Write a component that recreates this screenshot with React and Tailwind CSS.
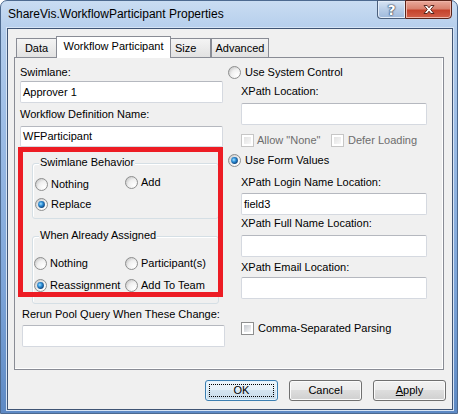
import React, { useId } from "react";

function Radio({ checked }) {
  const raw = useId();
  const id = "r" + raw.replace(/[^a-zA-Z0-9]/g, "");
  return (
    <svg width="13" height="13" viewBox="0 0 13 13" className="shrink-0 block">
      <defs>
        <radialGradient id={id + "a"} cx="0.72" cy="0.72" r="0.85">
          <stop offset="0" stopColor="#ffffff" />
          <stop offset="0.55" stopColor="#f0f0f0" />
          <stop offset="1" stopColor="#c4c4c4" />
        </radialGradient>
        <radialGradient id={id + "b"} cx="0.4" cy="0.4" r="0.65">
          <stop offset="0" stopColor="#a8e4ff" />
          <stop offset="0.45" stopColor="#2e8fd8" />
          <stop offset="1" stopColor="#0b3d73" />
        </radialGradient>
      </defs>
      <circle cx="6.5" cy="6.5" r="6" fill={`url(#${id}a)`} stroke="#8e8f8f" strokeWidth="1" />
      {checked && <circle cx="6.5" cy="6.5" r="3.4" fill={`url(#${id}b)`} />}
    </svg>
  );
}

function Check({ disabled }) {
  return (
    <span
      className={
        disabled
          ? "block w-[13px] h-[13px] shrink-0 border border-[#c6c6c6] bg-white p-[2px]"
          : "block w-[13px] h-[13px] shrink-0 border border-[#8e8f8f] bg-white p-[2px]"
      }
    >
      <span
        className={
          disabled
            ? "block w-full h-full bg-gradient-to-br from-[#e2e2e2] to-[#f8f8f8]"
            : "block w-full h-full bg-gradient-to-br from-[#c5c9cf] to-[#f7f7f7]"
        }
      />
    </span>
  );
}

function Field({ value, className }) {
  return (
    <div
      className={
        "flex items-center bg-white border border-[#d5d9e0] border-t-[#b5b8bf] rounded-[2px] pl-[2px] " +
        className
      }
    >
      {value}
    </div>
  );
}

function Btn({ children, def }) {
  return (
    <div
      className={
        def
          ? "w-[73px] h-[21px] rounded-[3px] border border-[#3c7fb1] bg-[linear-gradient(to_bottom,#eef6fb_0%,#e4eff7_50%,#d3e4f0_50%,#c9dcea_100%)] shadow-[inset_0_0_0_1px_#e3f3fd] flex items-center justify-center p-[3px]"
          : "w-[73px] h-[21px] rounded-[3px] border border-[#707070] bg-[linear-gradient(to_bottom,#f2f2f2_0%,#ebebeb_50%,#dddddd_50%,#cfcfcf_100%)] shadow-[inset_0_0_0_1px_#fbfbfb] flex items-center justify-center"
      }
    >
      {def ? (
        <span className="w-full h-full border border-dotted border-black flex items-center justify-center">
          {children}
        </span>
      ) : (
        children
      )}
    </div>
  );
}

function RadioItem({ checked, label, className }) {
  return (
    <div className={"flex items-center gap-[3px] h-[13px] " + (className || "")}>
      <Radio checked={checked} />
      <span>{label}</span>
    </div>
  );
}

function Group({ title, className, children }) {
  return (
    <div
      className={
        "relative border border-[#d5dfe5] rounded-[3px] shadow-[inset_1px_1px_0_#ffffff] " + className
      }
    >
      <span className="absolute left-[6px] -top-[8px] px-[1px] bg-[#f0f0f0] leading-[13px]">{title}</span>
      {children}
    </div>
  );
}

export default function App() {
  return (
    <div className="w-[458px] h-[414px] overflow-hidden bg-white font-['Liberation_Sans',Arial,sans-serif] text-[11px] leading-[13px] text-black">
      <div className="w-full h-full rounded-t-[7px] border border-[#4d6a90] bg-[linear-gradient(to_bottom,#c9dcf2_0%,#b2cceb_8%,#9dbde6_30%,#7ca4d8_70%,#5d89c4_100%)] flex flex-col">
        {/* Title bar */}
        <div className="h-[27px] flex justify-between">
          <div className="pl-[7px] self-center text-[12px] leading-[15px] text-black">
            ShareVis.WorkflowParticipant Properties
          </div>
          <div className="flex mr-[5px] self-start -mt-px">
            <div className="w-[28px] h-[19px] rounded-bl-[4px] border border-[#4b5f7c] border-r-0 bg-gradient-to-b from-[#d7e4f4] via-[#b8cde7] to-[#9fb9dc] shadow-[inset_0_0_0_1px_#e3ecf8] flex items-center justify-center">
              <span className="text-white font-bold text-[14px] leading-[14px] font-['DejaVu_Sans',sans-serif] [text-shadow:0_0_1px_#2d3e57,0_0_1px_#2d3e57,0_0_2px_#2d3e57]">
                ?
              </span>
            </div>
            <div className="w-[47px] h-[19px] rounded-br-[4px] border border-[#5a2319] bg-[linear-gradient(to_bottom,#e9a99b_0%,#d9826f_45%,#c5432c_55%,#d2604a_100%)] shadow-[inset_0_0_0_1px_#f0b5a8] flex items-center justify-center">
              <svg width="14" height="11" viewBox="0 0 14 11">
                <path
                  d="M2 1.5 L5.2 1.5 L7 3.8 L8.8 1.5 L12 1.5 L8.7 5.5 L12 9.5 L8.8 9.5 L7 7.2 L5.2 9.5 L2 9.5 L5.3 5.5 Z"
                  fill="#ffffff"
                  stroke="#4a1a12"
                  strokeWidth="0.9"
                  strokeLinejoin="round"
                />
              </svg>
            </div>
          </div>
        </div>

        {/* Client */}
        <div className="ml-[6px] w-[446px] h-[382px] border border-[#3f5474] shadow-[0_0_0_1px_#d6e4f5] bg-[#f0f0f0] flex flex-col">
          {/* Tabs */}
          <div className="ml-[8px] mt-[7px] h-[21px] flex items-end">
            <div className="w-[40px] h-[19px] border border-r-0 border-b-0 border-[#898c95] bg-gradient-to-b from-[#f4f4f4] to-[#e2e2e2] flex items-center justify-center">
              Data
            </div>
            <div className="relative z-10 -mb-px w-[115px] h-[22px] border border-b-0 border-[#898c95] bg-white flex items-center justify-center pb-[2px]">
              Workflow Participant
            </div>
            <div className="w-[40px] h-[19px] border border-l-0 border-b-0 border-[#898c95] bg-gradient-to-b from-[#f4f4f4] to-[#e2e2e2] flex items-center pl-[4px]">
              Size
            </div>
            <div className="w-[58px] h-[19px] border border-b-0 border-[#898c95] bg-gradient-to-b from-[#f4f4f4] to-[#e2e2e2] flex items-center justify-center">
              Advanced
            </div>
          </div>

          {/* Page */}
          <div className="ml-[6px] w-[430px] h-[313px] border border-[#898c95] shadow-[inset_-1px_-1px_0_#ffffff] bg-[#f0f0f0] flex">
            {/* Left column */}
            <div className="relative ml-[5px] w-[205px] pt-[8px] flex flex-col">
              <div>Swimlane:</div>
              <Field value="Approver 1" className="mt-[2px] h-[22px] w-[203px]" />
              <div className="mt-[5px]">Workflow Definition Name:</div>
              <Field value="WFParticipant" className="mt-[5px] h-[21px] w-[203px]" />

              <Group title="Swimlane Behavior" className="mt-[16px] ml-[12px] w-[187px] h-[56px]">
                <div className="pt-[12px] flex items-start">
                  <RadioItem label="Nothing" className="ml-[2px] mt-[2px] w-[90px]" />
                  <RadioItem label="Add" />
                </div>
                <RadioItem label="Replace" checked className="ml-[2px] mt-[7px]" />
              </Group>

              <Group title="When Already Assigned" className="mt-[17px] ml-[12px] w-[187px] h-[68px]">
                <div className="pt-[20px] flex items-start">
                  <RadioItem label="Nothing" className="ml-[1px] w-[91px]" />
                  <RadioItem label="Participant(s)" />
                </div>
                <div className="mt-[9px] flex items-start">
                  <RadioItem label="Reassignment" checked className="ml-[1px] w-[91px]" />
                  <RadioItem label="Add To Team" />
                </div>
              </Group>

              <div className="mt-[4px] ml-[2px]">Rerun Pool Query When These Change:</div>
              <Field value="" className="mt-[4px] ml-[2px] h-[22px] w-[203px]" />

              {/* red highlight annotation */}
              <div className="absolute left-[-2px] top-[89px] w-[205px] h-[150px] border-[5px] border-[#ed1c24]" />
            </div>

            {/* Right column */}
            <div className="ml-[3px] w-[200px] pt-[8px] flex flex-col">
              <div className="flex items-center gap-[4px] h-[13px]">
                <Radio />
                <span>Use System Control</span>
              </div>
              <div className="mt-[6px] ml-[13px]">XPath Location:</div>
              <Field value="" className="mt-[5px] ml-[13px] h-[22px] w-[186px]" />
              <div className="mt-[9px] ml-[13px] flex items-center h-[13px] text-[#6d6d6d]">
                <div className="w-[90px] flex items-center gap-[3px]">
                  <Check disabled />
                  <span>Allow "None"</span>
                </div>
                <div className="flex items-center gap-[4px]">
                  <Check disabled />
                  <span>Defer Loading</span>
                </div>
              </div>
              <div className="mt-[7px] flex items-center gap-[4px] h-[13px]">
                <Radio checked />
                <span>Use Form Values</span>
              </div>
              <div className="mt-[9px] ml-[13px]">XPath Login Name Location:</div>
              <Field value="field3" className="mt-[4px] ml-[13px] h-[22px] w-[186px]" />
              <div className="mt-[2px] ml-[13px]">XPath Full Name Location:</div>
              <Field value="" className="mt-[5px] ml-[13px] h-[22px] w-[186px]" />
              <div className="mt-[4px] ml-[13px]">XPath Email Location:</div>
              <Field value="" className="mt-[3px] ml-[13px] h-[22px] w-[186px]" />
              <div className="mt-[23px] ml-[13px] flex items-center gap-[4px] h-[13px]">
                <Check />
                <span>Comma-Separated Parsing</span>
              </div>
            </div>
          </div>

          {/* Buttons */}
          <div className="mt-[10px] pr-[6px] flex justify-end gap-[11px]">
            <Btn def>OK</Btn>
            <Btn>Cancel</Btn>
            <Btn>
              <span>
                <span className="underline">A</span>pply
              </span>
            </Btn>
          </div>
        </div>
      </div>
    </div>
  );
}
